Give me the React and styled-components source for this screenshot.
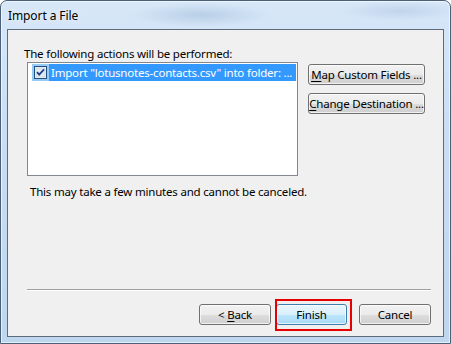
import React from 'react';
import styled, { createGlobalStyle } from 'styled-components';

const GlobalStyle = createGlobalStyle`
  html, body {
    margin: 0;
    padding: 0;
    overflow: hidden;
    background: #ffffff;
  }
  body {
    font-family: "Noto Sans", "Open Sans", sans-serif;
    font-size: 11.5px;
    letter-spacing: -0.2px;
    color: #000;
  }
`;

const Window = styled.div`
  box-sizing: border-box;
  width: 451px;
  height: 344px;
  display: flex;
  flex-direction: column;
  border: 1px solid #4a5f78;
  border-radius: 7px 7px 0 0;
  padding: 0 6px 6px 6px;
  background:
    radial-gradient(ellipse 70px 12px at 200px 14px, rgba(150, 180, 210, 0.45), transparent),
    radial-gradient(ellipse 60px 10px at 400px 10px, rgba(160, 185, 215, 0.4), transparent),
    linear-gradient(180deg, #d7e7f8 0%, #c9ddf3 40%, #bfd6ef 100%);
  box-shadow: inset 0 0 0 1px rgba(255, 255, 255, 0.6);
`;

const TitleBar = styled.div`
  height: 28px;
  display: flex;
  align-items: center;
  padding-left: 1px;
  font-size: 12px;
  letter-spacing: -0.1px;
  color: #000;
  text-shadow: 0 0 8px rgba(255, 255, 255, 0.9);
`;

const Client = styled.div`
  flex: 1;
  display: flex;
  flex-direction: column;
  border: 1px solid #5e6b7b;
  background: #f0f0f0;
  padding: 16px 12px 11px 16px;
`;

const Label = styled.div`
  line-height: 15px;
  margin-bottom: 1px;
`;

const Row = styled.div`
  display: flex;
  align-items: flex-start;
  gap: 10px;
  padding-left: 3px;
`;

const ListBox = styled.div`
  box-sizing: border-box;
  width: 271px;
  height: 114px;
  border: 1px solid #828790;
  background: #fff;
  padding: 1px;
`;

const ListItem = styled.div`
  display: flex;
  align-items: stretch;
  height: 17px;
`;

const CheckCell = styled.div`
  width: 17px;
  margin-left: 3px;
  display: flex;
  align-items: center;
  justify-content: center;
  background: #99c9f5;
`;

const ItemText = styled.div`
  flex: 1;
  background: #3399ff;
  color: #fff;
  padding-left: 2px;
  line-height: 17px;
  white-space: nowrap;
  overflow: hidden;
`;

const SideButtons = styled.div`
  display: flex;
  flex-direction: column;
  gap: 8px;
  padding-top: 2px;
`;

const Button = styled.button`
  box-sizing: border-box;
  width: ${(p) => p.width || 72}px;
  height: 21px;
  padding: 0;
  font-family: inherit;
  font-size: inherit;
  letter-spacing: inherit;
  white-space: nowrap;
  color: #000;
  border: 1px solid ${(p) => (p.primary ? '#3c7fb1' : '#707070')};
  border-radius: 3px;
  background: ${(p) =>
    p.primary
      ? 'linear-gradient(180deg, #eaf6fd 0%, #d9f0fc 50%, #bee6fd 51%, #a7d9f5 100%)'
      : 'linear-gradient(180deg, #f2f2f2 0%, #ebebeb 50%, #dddddd 51%, #cfcfcf 100%)'};
  box-shadow: inset 0 0 0 1px rgba(255, 255, 255, 0.7);
  text-align: center;
  line-height: 18px;
  u {
    text-decoration: underline;
    text-underline-offset: 2px;
  }
`;

const Note = styled.div`
  line-height: 15px;
  margin-top: 8px;
  padding-left: 6px;
`;

const Spacer = styled.div`
  flex: 1;
`;

const Separator = styled.div`
  height: 0;
  border-top: 1px solid #a0a0a0;
  border-bottom: 1px solid #ffffff;
  margin: 0 0 13px 3px;
`;

const Footer = styled.div`
  display: flex;
  justify-content: flex-end;
  align-items: center;
`;

const DefaultSlot = styled.div`
  position: relative;
  display: flex;
  margin: 0 12px 0 5px;
`;

/* red highlight drawn over the default button */
const Highlight = styled.div`
  position: absolute;
  top: -5px;
  bottom: -6px;
  left: -1px;
  right: -5px;
  border: 2px solid #e60000;
  pointer-events: none;
`;

const CheckIcon = () => (
  <svg width="13" height="13" viewBox="0 0 13 13">
    <rect x="0.5" y="0.5" width="12" height="12" fill="#f4f4f4" stroke="#1c5180" />
    <rect x="2" y="2" width="9" height="9" fill="#e4ebf2" stroke="#b6c5d5" strokeWidth="0.5" />
    <path d="M3 6.2 L5.2 8.6 L10 3.4" fill="none" stroke="#21418b" strokeWidth="1.8" />
  </svg>
);

export default function App() {
  return (
    <>
      <GlobalStyle />
      <Window>
        <TitleBar>Import a File</TitleBar>
        <Client>
          <Label>The following actions will be performed:</Label>
          <Row>
            <ListBox>
              <ListItem>
                <CheckCell>
                  <CheckIcon />
                </CheckCell>
                <ItemText>Import "lotusnotes-contacts.csv" into folder: ...</ItemText>
              </ListItem>
            </ListBox>
            <SideButtons>
              <Button width={117}>
                <u>M</u>ap Custom Fields ...
              </Button>
              <Button width={117}>
                <u>C</u>hange Destination ...
              </Button>
            </SideButtons>
          </Row>
          <Note>This may take a few minutes and cannot be canceled.</Note>
          <Spacer />
          <Separator />
          <Footer>
            <Button>
              &lt; <u>B</u>ack
            </Button>
            <DefaultSlot>
              <Button primary width={71}>Finish</Button>
              <Highlight />
            </DefaultSlot>
            <Button>Cancel</Button>
          </Footer>
        </Client>
      </Window>
    </>
  );
}
